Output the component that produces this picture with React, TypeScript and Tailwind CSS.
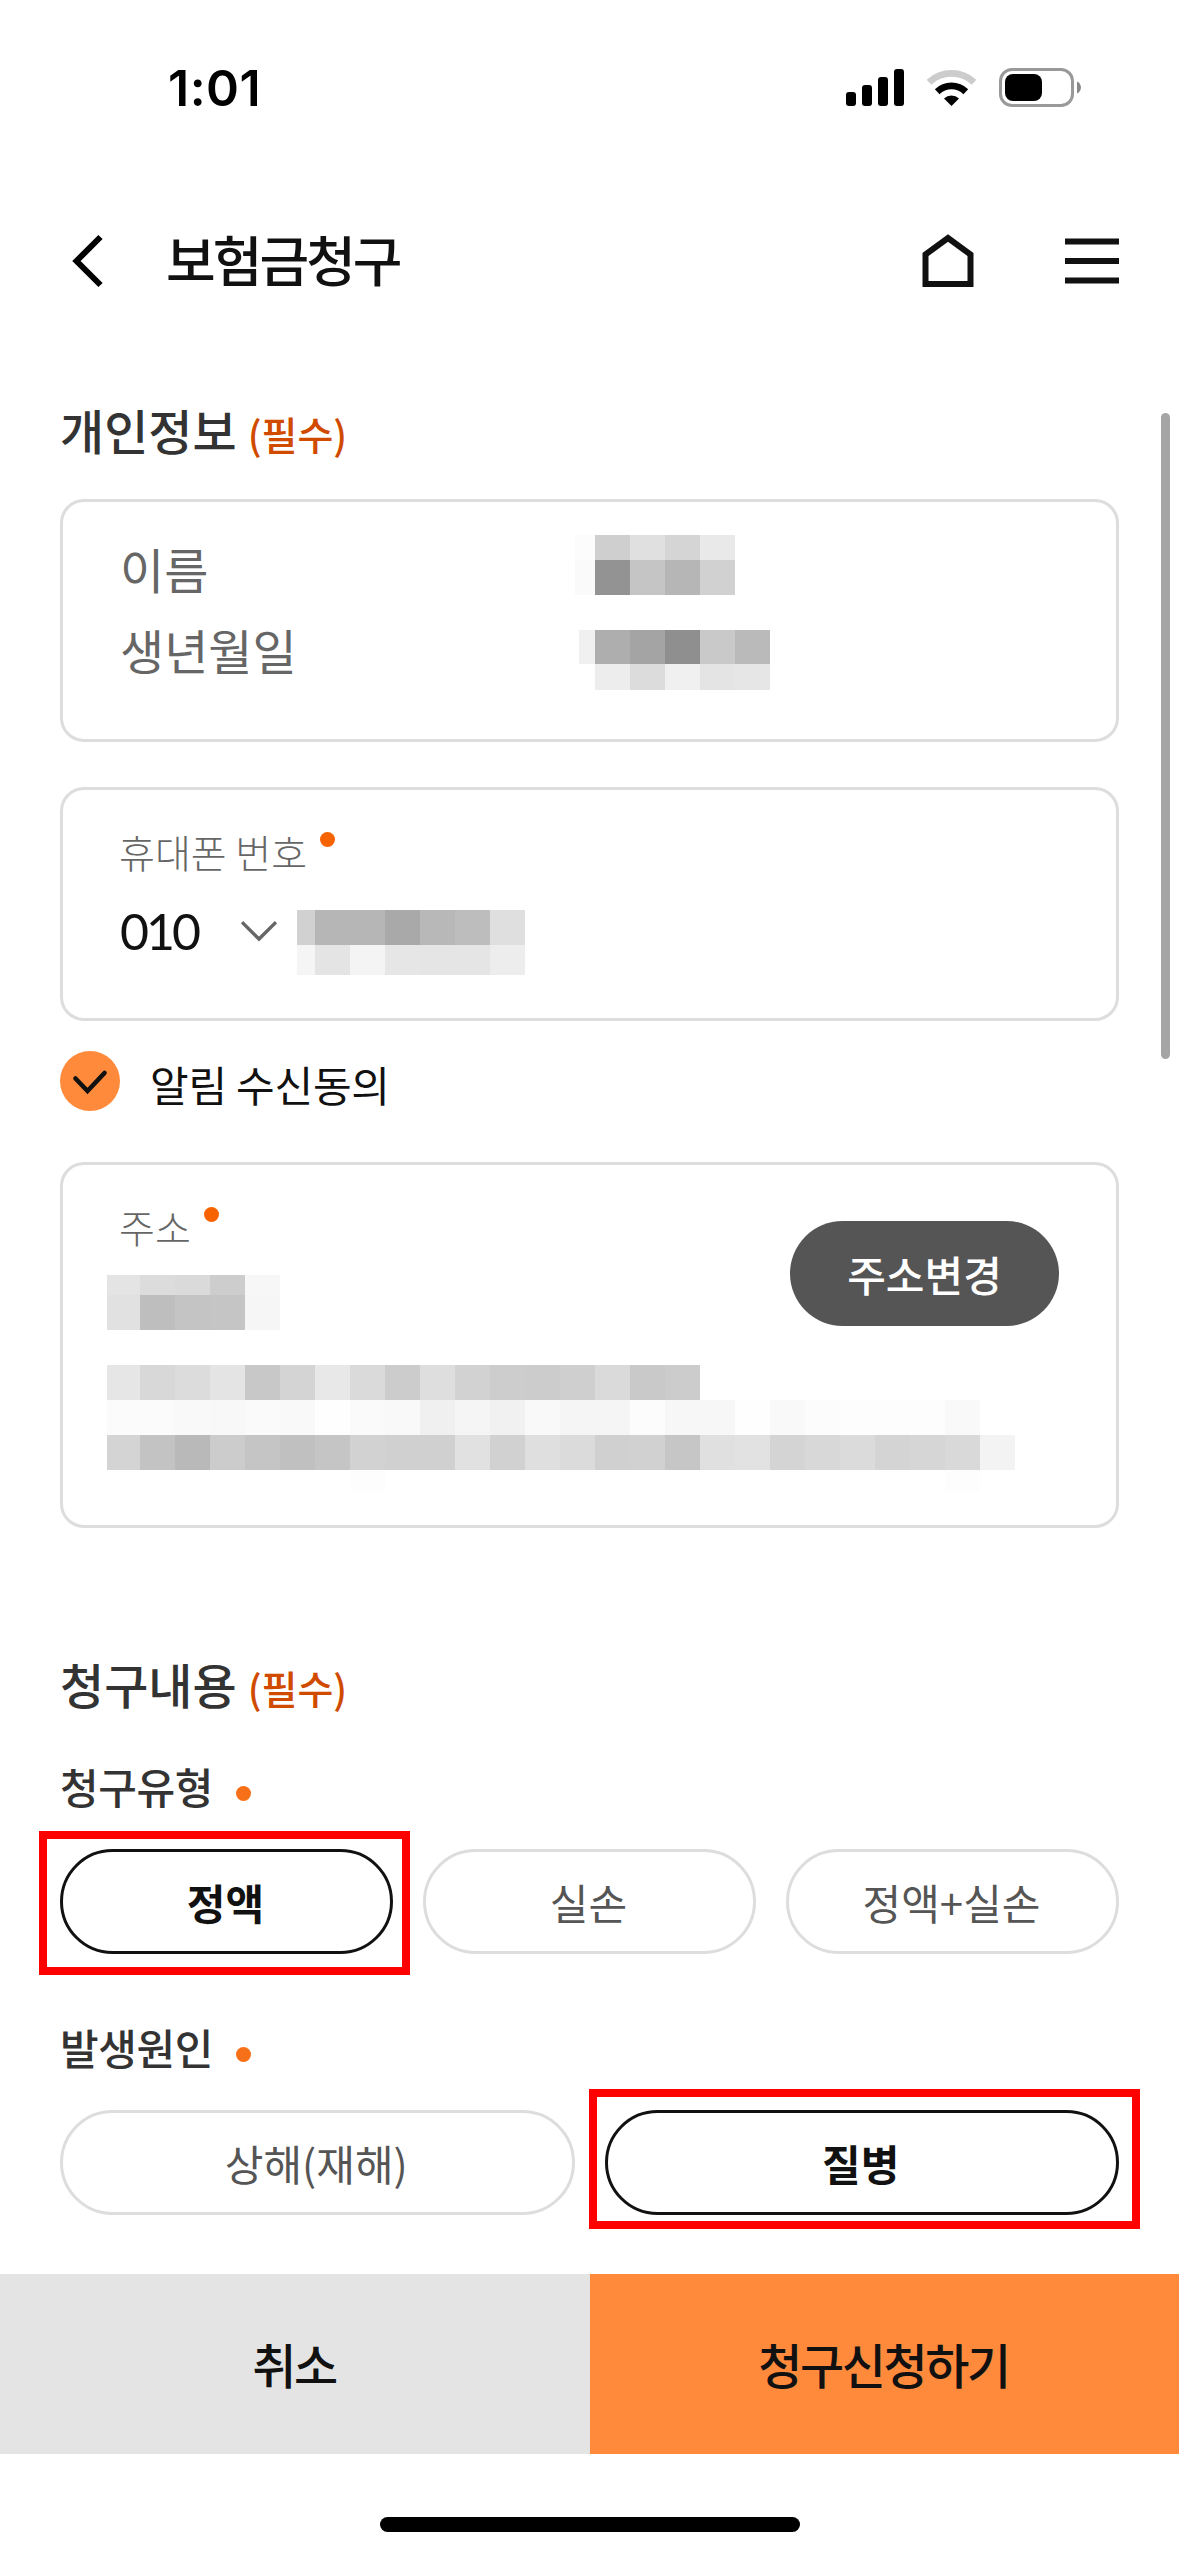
import { useState } from "react";
import { clsx } from "clsx";

interface MosaicProps {
  // column widths, left to right
  columns: number[];
  rows: { height: number; shades: string }[];
  className?: string;
}

// Masks a private value. Each shade is a two digit grey level, "--" is empty.
function Mosaic({ columns, rows, className }: MosaicProps) {
  return (
    <div className={clsx("flex flex-col", className)}>
      {rows.map((row, r) => (
        <div key={r} className="flex" style={{ height: row.height }}>
          {row.shades.split(" ").map((shade, i) => (
            <div
              key={i}
              className="h-full shrink-0"
              style={{
                width: columns[i],
                backgroundColor:
                  shade === "--" ? undefined : `#${shade}${shade}${shade}`,
              }}
            />
          ))}
        </div>
      ))}
    </div>
  );
}

const addressColumns = [33, ...Array<number>(25).fill(35)];

function StatusBar() {
  return (
    <div className="flex h-[176px] items-center justify-between pr-[98px] pl-[168px]">
      <span className="font-['Inter'] text-[50px] leading-none font-semibold tracking-[0.01em] text-black">
        1:01
      </span>
      <svg width="235" height="40" viewBox="846 68 235 40" fill="none">
        <g fill="#000">
          <rect x="846" y="92" width="10" height="14" rx="3" />
          <rect x="862" y="85" width="10" height="21" rx="3" />
          <rect x="878" y="77" width="10" height="29" rx="3" />
          <rect x="894" y="69" width="10" height="37" rx="3" />
        </g>
        <path
          d="M929 82.2A33.2 33.2 0 0 1 974 82.2"
          stroke="#ccc"
          strokeWidth="6.8"
        />
        <path
          d="M937.2 91.7A20.7 20.7 0 0 1 965.8 91.7"
          stroke="#000"
          strokeWidth="6.8"
        />
        <path d="M951.5 106L944 98.4A11.5 11.5 0 0 1 959 98.4Z" fill="#000" />
        <rect
          x="1000.5"
          y="69.5"
          width="72"
          height="36"
          rx="11.5"
          stroke="#999"
          strokeWidth="3"
        />
        <rect x="1005" y="74" width="37" height="27" rx="8" fill="#000" />
        <path d="M1077 81.5C1082.3 83.5 1082.3 91.5 1077 93.5Z" fill="#888" />
      </svg>
    </div>
  );
}

function Header() {
  return (
    <header className="flex h-[170px] items-center pr-[60px] pl-[72px]">
      <svg width="32" height="54" viewBox="0 0 32 54" fill="none">
        <path d="M28.5 3L4.5 27L28.5 51" stroke="#000" strokeWidth="6" />
      </svg>
      <h1 className="-mt-[5px] ml-[62px] grow text-[54px] leading-none font-medium tracking-[-0.055em] text-[#111]">
        보험금청구
      </h1>
      <svg width="52" height="54" viewBox="0 0 52 54" fill="none">
        <path
          d="M3.5 20.5L26 4L48.5 20.5V50H3.5Z"
          stroke="#111"
          strokeWidth="6"
        />
      </svg>
      <svg
        className="ml-[91px]"
        width="54"
        height="46"
        viewBox="0 0 54 46"
        fill="none"
      >
        <path
          d="M0 3.5H54M0 23H54M0 42.5H54"
          stroke="#111"
          strokeWidth="6.2"
        />
      </svg>
    </header>
  );
}

function SectionTitle({
  children,
  className,
}: {
  children: string;
  className?: string;
}) {
  return (
    <h2
      className={clsx(
        "flex h-[60px] items-baseline text-[48px] leading-[58px] font-medium text-[#333]",
        className
      )}
    >
      {children}
      <span className="ml-[11px] text-[39px] text-[#d04a00]">(필수)</span>
    </h2>
  );
}

function FieldLabel({ children }: { children: string }) {
  return (
    <div className="-ml-px flex h-12 text-[39px] leading-[48px] font-light text-[#666]">
      {children}
      <span className="mt-[5px] ml-[13px] size-[15px] rounded-full bg-[#f76300]" />
    </div>
  );
}

interface ChoiceGroupProps {
  label: string;
  options: string[];
  initial: string;
  highlightClass: string;
  className?: string;
}

function ChoiceGroup({
  label,
  options,
  initial,
  highlightClass,
  className,
}: ChoiceGroupProps) {
  const [selected, setSelected] = useState(initial);

  return (
    <div className={className}>
      <div className="flex h-[60px] text-[42px] leading-[60px] font-medium text-[#333]">
        <span className="w-[176px] tracking-[-0.01em]">{label}</span>
        <span className="mt-[30px] size-[15px] rounded-full bg-[#f77017]" />
      </div>
      <div className="mt-[33px] flex gap-[30px]">
        {options.map((option) => (
          <div key={option} className="relative flex-1">
            <button
              type="button"
              onClick={() => setSelected(option)}
              className={clsx(
                "h-[105px] w-full rounded-full border-[3px] pr-0.5 text-[42px] leading-none",
                selected === option
                  ? "border-[#111] font-bold text-[#111]"
                  : "border-[#ddd] text-[#555]"
              )}
            >
              {option}
            </button>
            {initial === option && (
              <div
                className={clsx(
                  "pointer-events-none absolute border-8 border-[#ff0000]",
                  highlightClass
                )}
              />
            )}
          </div>
        ))}
      </div>
    </div>
  );
}

export default function App() {
  return (
    <div className="relative flex h-[2556px] w-[1179px] flex-col overflow-hidden bg-white font-['Noto_Sans_CJK_KR',sans-serif]">
      <StatusBar />
      <Header />

      <main className="px-[60px] pt-[54px]">
        <SectionTitle>개인정보</SectionTitle>

        {/* Name and birth date */}
        <div className="mt-[39px] h-[243px] rounded-[24px] border-[3px] border-[#ddd] pt-[26px] pl-[57px] text-[48px] leading-[81px] text-[#666]">
          <div className="flex h-[81px]">
            <span className="w-[455px]">이름</span>
            <Mosaic
              className="mt-[7px]"
              columns={[20, 35, 35, 35, 35]}
              rows={[
                { height: 25, shades: "fc cf e0 d5 e9" },
                { height: 35, shades: "fa 93 c5 b6 d1" },
              ]}
            />
          </div>
          <div className="flex h-[81px]">
            <span className="w-[459px]">생년월일</span>
            <Mosaic
              className="mt-[21px]"
              columns={[16, 35, 35, 35, 35, 35]}
              rows={[
                { height: 35, shades: "f0 ae a4 8f c9 ba" },
                { height: 26, shades: "-- ed dc f0 e4 e6" },
              ]}
            />
          </div>
        </div>

        {/* Phone number */}
        <div className="mt-[45px] h-[234px] rounded-[24px] border-[3px] border-[#ddd] pt-[37px] pl-[57px]">
          <FieldLabel>휴대폰 번호</FieldLabel>
          <div className="mt-[35px] flex items-start">
            <span className="w-[121px] font-['Lato'] text-[50px] leading-[42px] tracking-[-0.06em] text-[#111]">
              010
            </span>
            <svg
              className="mt-[11px]"
              width="36"
              height="21"
              viewBox="0 0 36 21"
              fill="none"
            >
              <path d="M1 1.2L18 18L35 1.2" stroke="#666" strokeWidth="3.4" />
            </svg>
            <Mosaic
              className="ml-5"
              columns={[18, 35, 35, 35, 35, 35, 35]}
              rows={[
                { height: 35, shades: "d1 b6 b6 a9 b8 bd df" },
                { height: 30, shades: "f5 e4 f4 e6 e5 e5 ed" },
              ]}
            />
          </div>
        </div>

        <label className="mt-[30px] flex h-[60px] items-center">
          <span className="flex size-[60px] rounded-full bg-[#ff8a3c]">
            <svg width="60" height="60" viewBox="0 0 60 60" fill="none">
              <path
                d="M15.5 27.5L27.5 40L44.5 22"
                stroke="#111"
                strokeWidth="4.6"
                strokeLinecap="round"
              />
            </svg>
          </span>
          <span className="mt-[5px] ml-[30px] text-[42px] leading-none tracking-[-0.005em] text-[#111]">
            알림 수신동의
          </span>
        </label>

        {/* Address */}
        <div className="mt-[51px] h-[366px] rounded-[24px] border-[3px] border-[#ddd] pt-[37px] pr-[57px] pl-[44px]">
          <div className="flex items-start justify-between">
            <div>
              <div className="pl-[13px]">
                <FieldLabel>주소</FieldLabel>
              </div>
              <Mosaic
                className="mt-[25px]"
                columns={addressColumns}
                rows={[
                  { height: 20, shades: "e4 dc da cd f7" },
                  { height: 35, shades: "e1 be c4 c5 f6" },
                ]}
              />
            </div>
            <button
              type="button"
              className="mt-[19px] h-[105px] w-[269px] rounded-full bg-[#555] text-[42px] leading-none font-medium text-white"
            >
              주소변경
            </button>
          </div>
          <Mosaic
            className="mt-[35px]"
            columns={addressColumns}
            rows={[
              {
                height: 35,
                shades: "e6 d8 dc e4 c8 d4 e8 da cc de d2 cd cc cf da c9 cc",
              },
              {
                height: 35,
                shades:
                  "fb fb f9 f8 fa f9 fe fa f9 f0 f5 f1 f9 f5 f5 fc f7 f7 fe f9 fc fd fd fd f9",
              },
              {
                height: 35,
                shades:
                  "d4 c3 b9 cc c5 c0 c5 d2 d0 d0 e1 d1 df db d0 d1 c6 e0 e2 d4 d8 db d4 d6 d9 f3",
              },
              {
                height: 21,
                shades:
                  "-- -- -- -- -- -- -- fd -- -- -- -- -- -- -- -- -- -- -- -- -- -- -- -- fd",
              },
            ]}
          />
        </div>

        <SectionTitle className="mt-[126px]">청구내용</SectionTitle>
        <ChoiceGroup
          className="mt-[42px]"
          label="청구유형"
          options={["정액", "실손", "정액+실손"]}
          initial="정액"
          highlightClass="-top-[18px] -right-[17px] -bottom-[21px] -left-[21px]"
        />
        <ChoiceGroup
          className="mt-[63px]"
          label="발생원인"
          options={["상해(재해)", "질병"]}
          initial="질병"
          highlightClass="-top-[21px] -right-[21px] -bottom-[14px] -left-[16px]"
        />
      </main>

      <footer className="mt-[59px] flex h-[180px] text-[48px] leading-none font-medium tracking-[-0.05em] text-[#111]">
        <button type="button" className="w-[590px] bg-[#e4e4e4] pr-0.5 pb-0.5">
          취소
        </button>
        <button type="button" className="flex-1 bg-[#ff8a3c] pr-0.5 pb-0.5">
          청구신청하기
        </button>
      </footer>
      <div className="mx-auto mt-[63px] h-[15px] w-[420px] rounded-full bg-black" />

      {/* Scroll thumb */}
      <div className="absolute top-[413px] right-[9px] h-[646px] w-[9px] rounded-full bg-[#a5a5a5]" />
    </div>
  );
}
